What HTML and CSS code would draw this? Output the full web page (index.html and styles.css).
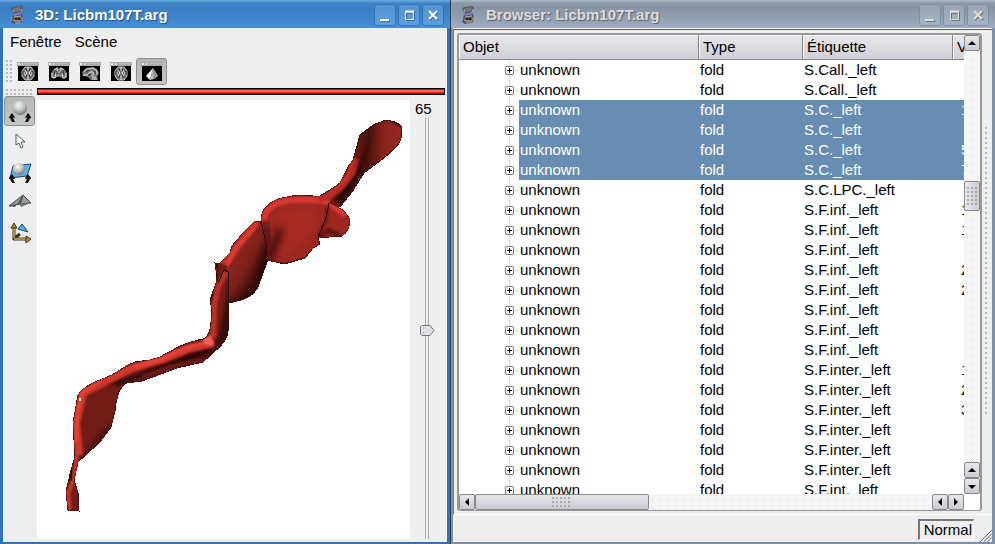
FILE: index.html
```html
<!DOCTYPE html>
<html lang="fr">
<head>
<meta charset="utf-8">
<title>Licbm107T.arg</title>
<link rel="stylesheet" href="styles.css">
</head>
<body>
<svg class="defs" aria-hidden="true">
  <symbol id="app" viewBox="0 0 16 18">
    <path d="M4 1l9-1 1 2-2 5 2 3-1 6-4 2H5l-3-2 1-5 2-4-3-4z" fill="#5a585a"/>
    <path d="M5 2l7-1-1 4-5 1z" fill="#777"/><path d="M4 3l1 3M13 3l-1 3" stroke="#aaa"/>
    <path d="M4 8l8-2v2l-7 2z" fill="#7d78ea"/>
    <path d="M5 11l7-1M4 14l3 1h5M6 17h5" stroke="#b5b0ac" fill="none"/><path d="M3 11l-1 4M13 11v4" stroke="#999"/>
    <path d="M6 12h2v2H6zM9 12h2v2H9z" fill="#222"/>
  </symbol>
  <symbol id="win" viewBox="0 0 22 19">
    <path d="M0 0h22v4H0z" fill="#aaa"/><path d="M1 1h2v2H1zM5 1h1v2H5z" fill="#eee"/><path d="M7 1h14v1H7z" fill="#bbb"/>
    <path d="M1 4h20v15H1z"/>
  </symbol>
  <symbol id="axial" viewBox="0 0 22 19">
    <use href="#win" width="22" height="19"/>
    <path d="M8 5h6l3 4v5l-3 4H8l-3-4V9z" fill="#6a6a6a" stroke="#ccc"/>
    <path d="M11 5v4M11 13v5M8 8l2 3-2 3M14 8l-2 3 2 3M7 10v3M15 10v3" stroke="#eee" fill="none"/>
    <path d="M9 7l1 2M13 7l-1 2M9 15l1-2M13 15l-1-2M6 9v4M16 9v4" stroke="#222" fill="none"/>
  </symbol>
  <symbol id="coronal" viewBox="0 0 22 19">
    <use href="#win" width="22" height="19"/>
    <path d="M6 7l4-2 1 2 1-2 4 2 3 4v4l-3 2-3-2-2-2-2 2-3 2-3-2v-4z" fill="#777"/>
    <path d="M6 8l3-2 1 5M16 8l-3-2-1 5M4 11v4l3 1 1-5M18 11v4l-3 1-1-5M9 14h4" stroke="#ddd" fill="none"/>
    <path d="M7 8l-1 5M15 8l1 5M9 9v3M13 9v3" stroke="#333" fill="none"/>
  </symbol>
  <symbol id="sagittal" viewBox="0 0 22 19">
    <use href="#win" width="22" height="19"/>
    <path d="M7 6l7-1 4 2 2 4-2 4 1 3h-7l-3-3-5-1-1-4z" fill="#777"/>
    <path d="M5 10l3-3 6-1 4 3v4M4 13h4l3-3h3l1 2-3 2M13 15h4M13 17h5" stroke="#ddd" fill="none"/>
    <path d="M7 10l3-2M16 9v3M9 13h3" stroke="#222" fill="none"/>
  </symbol>
  <symbol id="ball" viewBox="0 0 24 24">
    <path d="M4 14l3 4-1 1H5l2 4H4l-2-4H1v-1zM20 14l3 4v1h-1l-2 4h-3l2-4h-1l-1-1z" fill="#111"/>
  </symbol>
  <radialGradient id="sphere" cx=".4" cy=".3" r=".7"><stop stop-color="#f6f6f4"/><stop offset=".55" stop-color="#c4c4c1"/><stop offset="1" stop-color="#777"/></radialGradient>
</svg>

<main class="desktop">
  <section class="window active" aria-label="3D: Licbm107T.arg">
    <header class="titlebar">
      <svg class="app" aria-hidden="true"><use href="#app"/></svg>
      <h1>3D: Licbm107T.arg</h1>
      <button class="wm" aria-label="Réduire"><svg viewBox="0 0 20 20"><path d="M5 15h9" stroke-width="2"/></svg></button>
      <button class="wm" aria-label="Agrandir"><svg viewBox="0 0 20 20"><path d="M6.5 7v7.500h8V7M6 7h9" /><path d="M6 6.500h9" stroke-width="2"/></svg></button>
      <button class="wm" aria-label="Fermer"><svg viewBox="0 0 20 20"><path d="M6 6l8 8M14 6l-8 8" stroke-width="2"/></svg></button>
    </header>
    <div class="body">
      <nav class="menu"><button>Fenêtre</button><button>Scène</button></nav>
      <div class="toolbar">
        <span class="grip"></span>
        <button class="tool" aria-label="Axiale"><svg><use href="#axial"/></svg></button>
        <button class="tool" aria-label="Coronale"><svg><use href="#coronal"/></svg></button>
        <button class="tool" aria-label="Sagittale"><svg><use href="#sagittal"/></svg></button>
        <button class="tool" aria-label="Oblique"><svg><use href="#axial"/></svg></button>
        <button class="tool pressed" aria-label="3D" aria-pressed="true"><svg viewBox="0 0 22 19"><use href="#win" width="22" height="19"/><path d="M12 6l-7 8 4 4z" fill="#fff"/><path d="M12 6l5 8-4 3-4 1z" fill="#bbb"/><path d="M12 6v11l5-3z" fill="#999"/></svg></button>
      </div>
      <div class="work">
        <div class="side">
          <span class="grip flat"></span>
          <button class="mode pressed" aria-label="Rotation" aria-pressed="true"><svg viewBox="0 0 24 24"><circle cx="12" cy="9" r="7" fill="url(#sphere)"/><use href="#ball"/></svg></button>
          <button class="mode" aria-label="Sélection"><svg viewBox="0 0 24 24"><path d="M8 5v11l3-2 2 5 2-1-2-5h4z" fill="#fff" stroke="#555"/></svg></button>
          <button class="mode low" aria-label="Coupe"><svg viewBox="0 0 24 24"><path d="M5 6l18-2-4 12L2 18z" fill="#54b5ee" stroke="#246"/><circle cx="11" cy="9" r="6" fill="url(#sphere)"/><use href="#ball"/></svg></button>
          <button class="mode" aria-label="Vol"><svg viewBox="0 0 24 24"><path d="M1 16L15 5l-3 9zM12 14l3-9 8 8z" fill="#999" stroke="#444"/><path d="M1 16l10-2 4-9-8 12z" fill="#555"/><path d="M11 14l2 3 10-4z" fill="#777"/></svg></button>
          <button class="mode low" aria-label="Repère"><svg viewBox="0 0 24 24"><path d="M6 19V5M5 18h15M5 18l7-5" stroke="#333" stroke-width="3"/><path d="M6 17V6M6 18h13" stroke="#b58c31" stroke-width="2"/><path d="M3 7l3-5 3 5zM18 15l5 3-5 4z" fill="#b58c31" stroke="#443310"/><path d="M10 8l4-5 6 8z" fill="#48aee8" stroke="#246"/></svg></button>
        </div>
        <div class="view">
          <div class="redbar"></div>
          <div class="scene">
            <div class="canvas">
              <svg viewBox="37 100 373 439" preserveAspectRatio="xMinYMin meet" role="img" aria-label="Sillon central">
                <defs>
                  <filter id="b1" x="-30%" y="-30%" width="160%" height="160%"><feGaussianBlur stdDeviation="1"/></filter>
                  <filter id="b3" x="-50%" y="-50%" width="200%" height="200%"><feGaussianBlur stdDeviation="4"/></filter>
                  <linearGradient id="gTop" gradientUnits="userSpaceOnUse" x1="354" y1="148" x2="400" y2="150"><stop stop-color="#701a15"/><stop offset=".3" stop-color="#46100d"/><stop offset=".65" stop-color="#8c241d"/><stop offset="1" stop-color="#99281f"/></linearGradient>
                  <linearGradient id="gLeft" gradientUnits="userSpaceOnUse" x1="230" y1="250" x2="262" y2="268"><stop stop-color="#952720"/><stop offset=".6" stop-color="#7c201a"/><stop offset="1" stop-color="#3d0e0b"/></linearGradient>
                  <path id="pTop" d="M386 120C394 121 401 124 402 129C402 143 397 147 385 157L364 173L352 192L340 207L329 206L316 202L320 196L333 188L340 183L348 167L353 160L360 135L373 125Z"/>
                  <path id="pMid" d="M320 196C310 197 302 193 287 197C273 199 262 206 261 219L266 243L267 260L285 264L305 258L313 248L320 244L318 238L329 237L342 236C348 232 350 226 350 219L343 210L329 203L337 188Z"/>
                  <path id="pLeft" d="M255 221L261 222L268 243L267 262L258 287C253 296 246 300 228 303L224 270L217 277L215 263L220 263L230 253L232 246L243 233Z"/>
                  <path id="pStem" d="M217 270L215 263L227 266L229 285L229 303L228 332C226 342 218 349 215 351L203 362L177 368L142 381L127 383C118 387 116 400 115 411L111 427L100 442L78 462L74 480L78 493L79 511L68 510L66 492L71 470L75 457L73 423L78 395C84 386 90 384 112 375L128 365L135 362L150 360L160 357C180 346 184 343 203 339C211 337 211 322 212 310L210 300L216 283Z"/>
                  <clipPath id="cTop"><use href="#pTop"/></clipPath><clipPath id="cMid"><use href="#pMid"/></clipPath>
                  <clipPath id="cLeft"><use href="#pLeft"/></clipPath><clipPath id="cStem"><use href="#pStem"/></clipPath>
                </defs>
                <g fill="none" stroke="#2a0907" stroke-width="1" shape-rendering="crispEdges"><use href="#pTop"/><use href="#pMid"/><use href="#pLeft"/><use href="#pStem"/></g>
                <g clip-path="url(#cTop)">
                  <use href="#pTop" fill="url(#gTop)"/>
                  <path d="M375 128L366 152L362 172L344 205L334 200L358 168Z" fill="#2c0907" filter="url(#b1)"/>
                  <path d="M355 158L352 173L341 187L325 199" stroke="#b02b22" stroke-width="7" fill="none" filter="url(#b1)"/>
                  <path d="M352 163L346 178L330 194" stroke="#da3a30" stroke-width="2" fill="none" filter="url(#b1)"/>
                  <path d="M372 121L388 118L404 127L402 146L385 160" stroke="#2a0806" stroke-width="3" fill="none" filter="url(#b1)"/>
                </g>
                <g clip-path="url(#cLeft)">
                  <use href="#pLeft" fill="url(#gLeft)"/>
                  <path d="M228 304L250 299L262 284L268 246" stroke="#260705" stroke-width="6" fill="none" filter="url(#b3)"/>
                  <path d="M257 222L237 247L224 267L216 263" stroke="#ce362c" stroke-width="7" fill="none" filter="url(#b1)"/>
                  <path d="M255 227L234 250L228 264" stroke="#e74036" stroke-width="2" fill="none" filter="url(#b1)"/>
                  <path d="M214 262L224 267L216 280" stroke="#5a1511" stroke-width="4" fill="none" filter="url(#b1)"/>
                </g>
                <g clip-path="url(#cMid)">
                  <use href="#pMid" fill="#9b271f"/>
                  <path d="M270 217Q288 203 318 207Q321 226 305 241L279 260Z" fill="#a82a22" filter="url(#b3)"/>
                  <path d="M281 228L274 246L267 262" stroke="#200604" stroke-width="6" fill="none" filter="url(#b3)"/>
                  <path d="M265 224L269 250" stroke="#4e130f" stroke-width="9" fill="none" filter="url(#b3)"/>
                  <path d="M264 220C265 207 278 200 296 200Q313 199 325 201L346 215" stroke="#d73930" stroke-width="6" fill="none" filter="url(#b1)"/>
                  <path d="M318 199L338 190" stroke="#b72d25" stroke-width="9" fill="none" filter="url(#b1)"/>
                  <path d="M328 205L326 220L318 237" stroke="#54130f" stroke-width="2" fill="none" filter="url(#b1)"/>
                  <path d="M319 239L328 230L340 236" stroke="#65170f" stroke-width="5" fill="none" filter="url(#b1)"/>
                  <path d="M267 261L285 264L306 258L319 244" stroke="#581511" stroke-width="2" fill="none"/>
                </g>
                <path d="M261 221L266 243L267 261M329 203L326 218L318 237" stroke="#2a0907" fill="none" shape-rendering="crispEdges"/>
                <g clip-path="url(#cStem)">
                  <use href="#pStem" fill="#721c17"/>
                  <path d="M232 268V333L213 354L176 366L120 386L108 383L160 366L205 348L218 339Z" fill="#3c0e0b" filter="url(#b1)"/>
                  <path d="M204 354L176 358L145 373" stroke="#240705" stroke-width="5" fill="none" filter="url(#b3)"/>
                  <path d="M200 360L170 367L142 377" stroke="#6a1a15" stroke-width="4" fill="none" filter="url(#b1)"/>
                  <path d="M84 460L100 444L113 427" stroke="#390d0a" stroke-width="8" fill="none" filter="url(#b3)"/>
                  <path d="M215 262L213 281L208 302" stroke="#2b0907" stroke-width="8" fill="none" filter="url(#b1)"/>
                  <path d="M226 272L218 287L214 306L213 338" stroke="#b83028" stroke-width="6" fill="none" filter="url(#b1)"/>
                  <path d="M214 343L190 348L164 359L132 368L104 382L83 393L76 423L79 455" stroke="#ce372d" stroke-width="8" fill="none" filter="url(#b1)"/>
                  <path d="M212 341L184 348L160 360L134 367M102 380L82 393L78 408L76 442" stroke="#f04a40" stroke-width="2" fill="none" filter="url(#b1)"/>
                  <path d="M77 450L75 475L68 494L70 512" stroke="#c7372e" stroke-width="4" fill="none" filter="url(#b1)"/>
                  <path d="M70 466L71 480" stroke="#250705" stroke-width="4" fill="none" filter="url(#b1)"/>
                  <path d="M203 339L211 335L214 345L205 345Z" fill="#ef6259" filter="url(#b1)"/>
                </g>
                <path d="M218 283L224 270L228 272L228 300" stroke="#1c0504" fill="none" shape-rendering="crispEdges"/>
                <path d="M79 398h2v3h-2z" fill="#fff"/>
              </svg>
            </div>
            <div class="zoom">
              <label for="zoom">65</label>
              <input id="zoom" type="range" min="0" max="131" value="65">
            </div>
          </div>
        </div>
      </div>
    </div>
  </section>

  <section class="window browser" aria-label="Browser: Licbm107T.arg">
    <header class="titlebar">
      <svg class="app" aria-hidden="true"><use href="#app"/></svg>
      <h1>Browser: Licbm107T.arg</h1>
      <button class="wm" aria-label="Réduire"><svg viewBox="0 0 20 20"><path d="M5 15h9" stroke-width="2"/></svg></button>
      <button class="wm" aria-label="Agrandir"><svg viewBox="0 0 20 20"><path d="M6.500 7v7.500h8V7M6 7h9"/><path d="M6 6.500h9" stroke-width="2"/></svg></button>
      <button class="wm" aria-label="Fermer"><svg viewBox="0 0 20 20"><path d="M6 6l8 8M14 6l-8 8" stroke-width="2"/></svg></button>
    </header>
    <div class="body">
      <div class="dock">
        <div class="frame">
          <div class="list">
            <table>
              <colgroup><col class="c1"><col class="c2"><col class="c3"><col></colgroup>
              <thead><tr><th>Objet</th><th>Type</th><th>Étiquette</th><th>V</th></tr></thead>
              <tbody>
                <tr><td><button class="plus" aria-label="Développer"></button><span>unknown</span></td><td>fold</td><td>S.Call._left</td><td></td></tr>
                <tr><td><button class="plus" aria-label="Développer"></button><span>unknown</span></td><td>fold</td><td>S.Call._left</td><td></td></tr>
                <tr class="sel"><td><button class="plus" aria-label="Développer"></button><span>unknown</span></td><td>fold</td><td>S.C._left</td><td>1</td></tr>
                <tr class="sel"><td><button class="plus" aria-label="Développer"></button><span>unknown</span></td><td>fold</td><td>S.C._left</td><td></td></tr>
                <tr class="sel"><td><button class="plus" aria-label="Développer"></button><span>unknown</span></td><td>fold</td><td>S.C._left</td><td>5</td></tr>
                <tr class="sel"><td><button class="plus" aria-label="Développer"></button><span>unknown</span></td><td>fold</td><td>S.C._left</td><td>7</td></tr>
                <tr><td><button class="plus" aria-label="Développer"></button><span>unknown</span></td><td>fold</td><td>S.C.LPC._left</td><td></td></tr>
                <tr><td><button class="plus" aria-label="Développer"></button><span>unknown</span></td><td>fold</td><td>S.F.inf._left</td><td>1</td></tr>
                <tr><td><button class="plus" aria-label="Développer"></button><span>unknown</span></td><td>fold</td><td>S.F.inf._left</td><td>1</td></tr>
                <tr><td><button class="plus" aria-label="Développer"></button><span>unknown</span></td><td>fold</td><td>S.F.inf._left</td><td></td></tr>
                <tr><td><button class="plus" aria-label="Développer"></button><span>unknown</span></td><td>fold</td><td>S.F.inf._left</td><td>2</td></tr>
                <tr><td><button class="plus" aria-label="Développer"></button><span>unknown</span></td><td>fold</td><td>S.F.inf._left</td><td>2</td></tr>
                <tr><td><button class="plus" aria-label="Développer"></button><span>unknown</span></td><td>fold</td><td>S.F.inf._left</td><td></td></tr>
                <tr><td><button class="plus" aria-label="Développer"></button><span>unknown</span></td><td>fold</td><td>S.F.inf._left</td><td></td></tr>
                <tr><td><button class="plus" aria-label="Développer"></button><span>unknown</span></td><td>fold</td><td>S.F.inf._left</td><td></td></tr>
                <tr><td><button class="plus" aria-label="Développer"></button><span>unknown</span></td><td>fold</td><td>S.F.inter._left</td><td>1</td></tr>
                <tr><td><button class="plus" aria-label="Développer"></button><span>unknown</span></td><td>fold</td><td>S.F.inter._left</td><td>2</td></tr>
                <tr><td><button class="plus" aria-label="Développer"></button><span>unknown</span></td><td>fold</td><td>S.F.inter._left</td><td>3</td></tr>
                <tr><td><button class="plus" aria-label="Développer"></button><span>unknown</span></td><td>fold</td><td>S.F.inter._left</td><td></td></tr>
                <tr><td><button class="plus" aria-label="Développer"></button><span>unknown</span></td><td>fold</td><td>S.F.inter._left</td><td></td></tr>
                <tr><td><button class="plus" aria-label="Développer"></button><span>unknown</span></td><td>fold</td><td>S.F.inter._left</td><td></td></tr>
                <tr><td><button class="plus" aria-label="Développer"></button><span>unknown</span></td><td>fold</td><td>S.F.int._left</td><td></td></tr>
              </tbody>
            </table>
          </div>
          <div class="vbar">
            <button class="arrow" aria-label="Haut"><svg viewBox="0 0 14 14"><path d="M3 9h8L7 5z"/></svg></button>
            <div class="track"><div class="thumb"><i></i></div></div>
            <button class="arrow" aria-label="Haut"><svg viewBox="0 0 14 14"><path d="M3 9h8L7 5z"/></svg></button>
            <button class="arrow" aria-label="Bas"><svg viewBox="0 0 14 14"><path d="M3 6h8L7 10z"/></svg></button>
          </div>
          <div class="hbar">
            <button class="arrow" aria-label="Gauche"><svg viewBox="0 0 14 14"><path d="M9 3v8L5 7z"/></svg></button>
            <div class="track"><div class="thumb"><i></i></div></div>
            <button class="arrow" aria-label="Gauche"><svg viewBox="0 0 14 14"><path d="M9 3v8L5 7z"/></svg></button>
            <button class="arrow" aria-label="Droite"><svg viewBox="0 0 14 14"><path d="M5 3v8l4-4z"/></svg></button>
          </div>
        </div>
        <div class="splitter"></div>
      </div>
      <footer class="status">
        <output>Normal</output>
        <svg class="resize" viewBox="0 0 14 14" aria-hidden="true"><path d="M1 14L14 1M5 14l9-9M9 14l5-5" stroke="#555" fill="none"/><path d="M3 14L14 3M7 14l7-7M11 14l3-3" stroke="#fff" fill="none"/></svg>
      </footer>
    </div>
  </section>
</main>
</body>
</html>
```
FILE: styles.css
```css
* { box-sizing: border-box; }
body {
  margin: 0;
  background: #303c4c;
  color: #000;
  font: 15px/20px "Liberation Sans", Arial, sans-serif;
}
button { margin: 0; padding: 0; border: 0; background: none; color: inherit; font: inherit; }
svg { display: block; }
.defs { position: absolute; width: 0; height: 0; }

.desktop { display: grid; grid-template-columns: 450fr 544fr; gap: 1px; height: 100vh; }
.window {
  display: flex; flex-direction: column; min-width: 0; min-height: 0;
  border: solid #7f90a6; border-width: 0 3px 2px 2px;
}
.window.active { border-color: #2f74b8; border-width: 0 3px 2px 3px; }

.titlebar {
  display: flex; align-items: center; gap: 2px; flex: none; height: 28px;
  margin: 0 -3px 0 -2px; padding: 2px 6px 0 9px;
  background: linear-gradient(#aebccb, #8c9bab 3px, #8795a5 8px, #9dacc0);
  color: #dcdcdc;
}
.active .titlebar { background: linear-gradient(#6fabe3, #3f86ca 3px, #3a7dc1 8px, #448fdb); color: #fff; margin-left: -3px; }
.app { flex: none; width: 16px; height: 18px; }
.titlebar h1 { flex: 1; margin: 0 0 0 8px; font-size: 15px; line-height: 20px; font-weight: bold; white-space: nowrap; text-shadow: 1px 1px 1px #0006; }
.wm { width: 22px; height: 22px; border: 1px solid #7f8fa0; border-radius: 3px; background: linear-gradient(#98a5b4, #a5b3c5); }
.wm svg { width: 20px; height: 20px; fill: none; stroke: #dedede; stroke-width: 1; filter: drop-shadow(1px 1px 0 #0005); }
.active .wm { border-color: #3474b4; background: linear-gradient(#5793cf, #5b9fe2); }
.active .wm svg { stroke: #fff; }

.body { display: flex; flex-direction: column; flex: 1; min-height: 0; background: #eee; }
.menu { display: flex; gap: 13px; padding: 4px 7px; height: 29px; }
.menu button { height: 20px; }
.toolbar { display: flex; align-items: center; height: 29px; padding-left: 3px; }
.grip { width: 6px; height: 24px; background: radial-gradient(circle at 1px 1px, #bbb 1px, transparent 1px) 0 0 / 4px 4px; }
.grip.flat { width: 28px; height: 6px; margin: 1px 0 1px 3px; flex: none; }
.tool { display: grid; place-items: center; width: 31px; height: 27px; padding-left: 1px; }
.tool svg { width: 22px; height: 19px; }
.pressed { border: 1px solid #8e8e93; border-radius: 3px; background: linear-gradient(#b5b5b8, #c5c5c8); }

.work { display: flex; flex: 1; min-height: 0; }
.side { display: flex; flex-direction: column; width: 34px; flex: none; padding-top: 2px; }
.mode { display: grid; place-items: center; width: 31px; height: 30px; margin-left: 1px; flex: none; }
.mode.low { margin-top: 1px; }
.mode svg { width: 24px; height: 24px; fill: none; }
.view { display: flex; flex-direction: column; flex: 1; min-width: 0; padding: 2px 2px 3px 0; }
.redbar { height: 7px; flex: none; margin-bottom: 5px; border: 1px solid #000; background: linear-gradient(#e00 1px, #ff6464 1px 3px, #ff1d1d 3px 4px, #b00 4px); }
.scene { display: flex; flex: 1; min-height: 0; }
.canvas { flex: 1; min-width: 0; background: #fff; }
.canvas svg { width: 100%; height: 100%; }
.zoom { display: flex; flex-direction: column; width: 35px; padding-left: 5px; }
.zoom label { line-height: 18px; }
.zoom input {
  appearance: none; writing-mode: vertical-lr; direction: rtl;
  flex: 1; min-height: 0; width: 15px; margin: 0 0 0 5px; background: none;
}
.zoom input::-webkit-slider-runnable-track {
  width: 15px; height: 100%;
  background: linear-gradient(90deg, #aaa 1px, #eee 1px 3px, #aaa 3px) 5px 0 / 4px 100% no-repeat;
}
.zoom input::-webkit-slider-thumb {
  appearance: none; width: 15px; height: 11px; border: 0;
  background: url("data:image/svg+xml,%3Csvg xmlns='http://www.w3.org/2000/svg' viewBox='0 0 15 11'%3E%3Cpath d='M2 .5h8l4 5-4 5H2L.5 9V2z' fill='%23e2e2e6' stroke='%23777'/%3E%3Cpath d='M3 3h1M3 8h1' stroke='%23999'/%3E%3C/svg%3E") no-repeat;
}

.browser .body { border-top: 1px solid #fff; }
.dock { display: flex; flex: 1; min-height: 0; padding: 3px 0 3px 3px; border-top: 1px solid #555c4c; border-left: 1px solid #777; border-bottom: 1px solid #fff; }
.frame {
  display: grid; grid-template: minmax(0, 1fr) 16px / minmax(0, 1fr) 16px; flex: 1; min-width: 0;
  border: 2px solid #999; border-width: 2px 2px 1px; border-radius: 3px; background: #fff;
}
.list { overflow: hidden; }
table { width: 100%; table-layout: fixed; border-collapse: separate; border-spacing: 0; }
.c1 { width: 240px; } .c2 { width: 104px; } .c3 { width: 150px; }
th {
  height: 25px; padding: 0 0 0 4px; text-align: left; font-weight: normal; overflow: hidden; white-space: nowrap;
  border: solid #888; border-width: 0 1px 1px 0; background: linear-gradient(#e8e8ec, #cfcfd6); box-shadow: inset 1px 1px #f8f8fa;
}
th:last-child { border-right: 0; }
td { height: 20px; padding: 0 0 0 1px; white-space: nowrap; overflow: hidden; }
td:last-child { padding-left: 8px; }
td:first-child {
  padding-left: 46px;
  background: repeating-linear-gradient(#bbb 0 1px, transparent 1px 2px) 50px 0 / 1px 100% no-repeat, linear-gradient(90deg, #bbb 1px, transparent 1px 2px, #bbb 2px 3px, transparent 3px) 56px 10px / 4px 1px no-repeat;
}
td span { display: block; margin-left: 14px; padding-left: 1px; }
.sel td:not(:first-child), .sel span { background: #678db2; color: #fff; }
.plus {
  float: left; width: 9px; height: 9px; margin-top: 6px; border: 1px solid #777; border-radius: 2px;
  background: linear-gradient(#000, #000) center / 5px 1px no-repeat, linear-gradient(#000, #000) center / 1px 5px no-repeat, #fff;
}
.vbar, .hbar, .track { background: repeating-conic-gradient(#ececec 0 25%, #fff 0 50%) 0 0 / 2px 2px; }
.vbar { display: flex; flex-direction: column; }
.hbar { display: flex; }
.vbar .track, .hbar .track { flex: 1; }
.arrow { width: 16px; height: 16px; flex: none; border: 1px solid #888; border-radius: 2px; background: linear-gradient(#e8e8ec, #cacad2); }
.arrow svg { width: 14px; height: 14px; }
.vbar .track { padding-top: 130px; }
.thumb { display: grid; place-items: center; border: 1px solid #888; border-radius: 2px; background: linear-gradient(#e6e6ea, #cacad2); }
.vbar .thumb { height: 30px; background: linear-gradient(90deg, #e8e8ec, #cacad2); }
.hbar .thumb { width: 38%; height: 16px; }
.thumb i { width: 11px; height: 19px; background: radial-gradient(circle at 1px 1px, #aaa 1px, transparent 1px) 0 0 / 4px 4px; }
.hbar .thumb i { width: 19px; height: 11px; }
.splitter { width: 10px; flex: none; padding: 94px 3px; background: radial-gradient(circle at 1px 1px, #bbb 1px, transparent 1px) 0 0 / 4px 5px content-box; }
.status { display: flex; justify-content: flex-end; height: 27px; flex: none; padding-top: 4px; gap: 5px; }
.status output { height: 21px; padding: 0 1px 0 4px; border: solid; border-width: 2px 1px 1px 2px; border-color: #777 #fff #fff #777; line-height: 18px; }
.resize { width: 13px; height: 13px; align-self: flex-end; }
```
